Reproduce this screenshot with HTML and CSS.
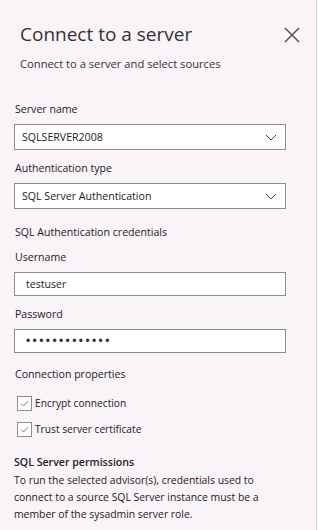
FILE: index.html
```html
<!DOCTYPE html>
<html lang="en">
<head>
    <meta charset="UTF-8">
    <meta name="viewport" content="width=device-width, initial-scale=1.0">
    <title>Connect to a server</title>
    <link rel="stylesheet" href="styles.css">
</head>
<body>

    <div class="panel">
        <div class="panel-header">
            <h1>Connect to a server</h1>
            <svg class="close" width="16" height="16" viewBox="0 0 16 16">
                <path d="M1 1 L15 15 M15 1 L1 15" stroke="#555" stroke-width="1.5" fill="none"/>
            </svg>
        </div>
        <p class="subtitle">Connect to a server and select sources</p>

        <label class="field-label first">Server name</label>
        <div class="select">
            <span>SQLSERVER2008</span>
            <svg width="12" height="7" viewBox="0 0 12 7"><path d="M1 1 L6 6 L11 1" stroke="#444" stroke-width="1" fill="none"/></svg>
        </div>

        <label class="field-label">Authentication type</label>
        <div class="select">
            <span>SQL Server Authentication</span>
            <svg width="12" height="7" viewBox="0 0 12 7"><path d="M1 1 L6 6 L11 1" stroke="#444" stroke-width="1" fill="none"/></svg>
        </div>

        <div class="section-label">SQL Authentication credentials</div>

        <label class="field-label user">Username</label>
        <div class="text-input">testuser</div>

        <label class="field-label">Password</label>
        <div class="text-input password">&#8226;&#8226;&#8226;&#8226;&#8226;&#8226;&#8226;&#8226;&#8226;&#8226;&#8226;&#8226;&#8226;</div>

        <div class="section-label props">Connection properties</div>

        <div class="check-row">
            <span class="checkbox"><svg width="13" height="13" viewBox="0 0 13 13"><path d="M3 6.5 L5.5 9 L10 4" stroke="#777" stroke-width="1" fill="none"/></svg></span>
            <span>Encrypt connection</span>
        </div>
        <div class="check-row">
            <span class="checkbox"><svg width="13" height="13" viewBox="0 0 13 13"><path d="M3 6.5 L5.5 9 L10 4" stroke="#777" stroke-width="1" fill="none"/></svg></span>
            <span>Trust server certificate</span>
        </div>

        <h3 class="perm-title">SQL Server permissions</h3>
        <p class="perm-text">To run the selected advisor(s), credentials used to connect to a source SQL Server instance must be a member of the sysadmin server role.</p>
    </div>

</body>
</html>
```

FILE: styles.css
```css
body {
    margin: 0;
    font-family: 'Open Sans', 'Noto Sans', sans-serif;
    background-color: #f8f4f8;
    color: #222;
}

.panel {
    box-sizing: border-box;
    width: 317px;
    height: 530px;
    border-right: 1px solid #d8d5d8;
    padding: 0 0 0 14px;
    font-size: 10.6px;
    line-height: 16px;
}

.panel-header {
    display: flex;
    justify-content: space-between;
    align-items: center;
    height: 24px;
    padding: 22px 16px 0 6px;
}

h1 {
    margin: 0;
    font-size: 19px;
    line-height: 24px;
    font-weight: normal;
    color: #333;
}

.close {
    margin-top: 1px;
}

.subtitle {
    margin: 10px 0 0 6px;
    font-size: 11.2px;
    color: #333;
}

.field-label {
    display: block;
    margin: 10px 0 7px 1px;
}

.field-label.first {
    margin-top: 29px;
}

.field-label.user {
    margin-top: 9px;
}

.select, .text-input {
    box-sizing: border-box;
    width: 272px;
    height: 26px;
    background-color: #fff;
    border: 1px solid #8c8c8c;
    display: flex;
    align-items: center;
    justify-content: space-between;
    padding: 0 8px 0 7px;
}

.text-input {
    height: 24px;
    padding-left: 11px;
    justify-content: flex-start;
}

.text-input + .field-label {
    margin-top: 10px;
}

.password {
    font-family: 'Liberation Sans', sans-serif;
    font-size: 12px;
    letter-spacing: 2.4px;
    color: #333;
}

.section-label {
    margin: 15px 0 0 1px;
}

.props {
    margin-top: 13px;
    margin-bottom: 13px;
}

.check-row {
    display: flex;
    align-items: center;
    gap: 3px;
    margin: 0 0 10px 3px;
    font-size: 10.2px;
}

.checkbox {
    box-sizing: border-box;
    width: 15px;
    height: 15px;
    border: 1px solid #8c8c8c;
    background-color: #fff;
    display: flex;
}

.perm-title {
    margin: 17px 0 0 0;
    font-size: 10.6px;
    line-height: 16px;
    font-weight: 600;
}

.perm-text {
    width: 250px;
    margin: 2px 0 0 0;
    line-height: 17px;
    font-size: 10.4px;
}
```
